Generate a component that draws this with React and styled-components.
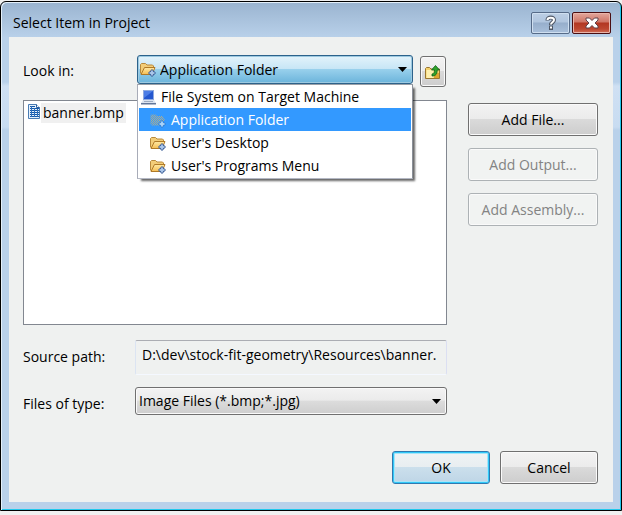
import React, { useState } from "react";
import styled, { createGlobalStyle, css } from "styled-components";

const GlobalStyle = createGlobalStyle`
  * { box-sizing: border-box; }
  body {
    margin: 0;
    background: #f0f0f0;
    color: #000;
    font: 14px/20px "Open Sans", "Noto Sans", sans-serif;
  }
  button, input, select { font: inherit; color: inherit; margin: 0; }
`;

const Dialog = styled.main`
  position: relative;
  border: 1px solid #000;
  border-radius: 6px 6px 0 0;
  margin-top: 1px;
  padding: 0 8px 8px;
  background: linear-gradient(#9ab4d0 0, #b9d1ea 36px, #b9d1ea 80px, #cfe0f3 84px, #c8dcf1 125px, #b9d1ea 128px);
  box-shadow: inset 1px 1px 0 #e4f0fa, inset -1px -1px 0 #20c8ec;
`;

const TitleBar = styled.header`
  display: flex;
  align-items: flex-start;
  justify-content: space-between;
  height: 35px;
  padding-left: 4px;
`;

const Title = styled.h1`
  margin: 11px 0 0;
  font: inherit;
`;

const Captions = styled.div`
  display: flex;
  gap: 2px;
  padding: 10px 2px 0 0;
`;

const CaptionButton = styled.button`
  display: flex;
  align-items: center;
  justify-content: center;
  width: 39px;
  height: 22px;
  padding: 0;
  border: 1px solid ${(p) => (p.$close ? "#4a0e12" : "#566b88")};
  border-radius: 2px;
  background: ${(p) =>
    p.$close
      ? "linear-gradient(#e3a79c 0, #cf7566 45%, #b23722 50%, #bd4730 80%, #d0705c)"
      : "linear-gradient(#bccfe5 0, #b0c5de 45%, #96aecb 50%, #a9c0db)"};
  box-shadow: inset 0 0 0 1px ${(p) => (p.$close ? "#e9b5aa" : "#cfdff0")};
`;

const Body = styled.form`
  background: #eff1f0;
  padding: 18px 15px 18px 14px;
`;

const Columns = styled.div`
  display: grid;
  grid-template-columns: minmax(0, 1fr) 130px;
  column-gap: 21px;
`;

const LookRow = styled.div`
  display: grid;
  grid-template-columns: 114px minmax(0, 1fr) 27px;
  align-items: start;
  height: 45px;
`;

const Label = styled.label`
  padding-top: 6px;
`;

const Combo = styled.div`
  position: relative;
  margin-right: 7px;
`;

const ComboIcon = styled.span`
  position: absolute;
  left: 3px;
  top: 6px;
  pointer-events: none;
`;

const Arrow = styled.svg`
  position: absolute;
  right: 6px;
  top: 12px;
  pointer-events: none;
`;

const Select = styled.select`
  display: block;
  appearance: none;
  width: 100%;
  height: ${(p) => (p.$hot ? "29px" : "28px")};
  padding: 0 20px 0 ${(p) => (p.$hot ? "22px" : "3px")};
  border: 1px solid ${(p) => (p.$hot ? "#2c628b" : "#707070")};
  border-radius: 3px;
  outline: none;
  background: ${(p) =>
    p.$hot
      ? "linear-gradient(#e3f3fb 0, #c6e5f5 49%, #98d0ec 50%, #6bb4db)"
      : "linear-gradient(#f3f3f3 0, #ebebeb 47%, #dcdcdc 50%, #cecece)"};
  box-shadow: inset 0 0 0 1px ${(p) => (p.$hot ? "#9cc9e0" : "#fafafa")};
`;

const Popup = styled.ul`
  position: absolute;
  z-index: 2;
  top: 100%;
  left: 0;
  right: 0;
  margin: 0;
  padding: 0 1px 1px;
  list-style: none;
  background: #fff;
  border: 1px solid #8a8f98;
  border-color: #9aa0a8 #8a8f98 #b4b8c4 #a8acb8;
  box-shadow: 3px 3px 2px -1px rgba(0, 0, 0, 0.6);
`;

const Option = styled.li`
  display: flex;
  align-items: center;
  gap: 5px;
  height: 23px;
  padding-left: ${(p) => (p.$nested ? "11px" : "2px")};
  white-space: nowrap;
  ${(p) =>
    p.$active &&
    css`
      background: #3399ff;
      color: #fff;
    `}
`;

const buttonFace = css`
  border: 1px solid #707070;
  border-radius: 3px;
  background: linear-gradient(#f3f3f3 0, #ebebeb 49%, #dadada 50%, #cdcdcd);
  box-shadow: inset 0 0 0 1px #fafafa;
`;

const PushButton = styled.button`
  ${buttonFace}
  height: 33px;
  padding: 0;
  &:disabled {
    color: #838383;
    border-color: #adb2b5;
    background: #f1f3f2;
  }
  ${(p) =>
    p.$primary &&
    css`
      border-color: #3079b0;
      background: linear-gradient(#f0f3f4 0, #e8eef1 49%, #cbdfec 50%, #bed5e6);
      box-shadow: inset 0 0 0 1px #30c8f8, inset 0 0 0 2px #a8e4f8;
    `}
`;

const UpButton = styled.button`
  ${buttonFace}
  display: flex;
  align-items: center;
  justify-content: center;
  width: 26px;
  height: 31px;
  margin-top: 1px;
  padding: 0;
`;

const FileList = styled.ul`
  height: 225px;
  margin: 0;
  padding: 2px 3px;
  list-style: none;
  background: #fff;
  border: 1px solid #828790;
`;

const FileItem = styled.li`
  display: flex;
  align-items: flex-start;
`;

const FileName = styled.span`
  padding: 0 2px;
  background: #f0f0f0;
`;

const Actions = styled.div`
  display: flex;
  flex-direction: column;
  gap: 12px;
  padding-top: 48px;
`;

const Fields = styled.div`
  display: grid;
  grid-template-columns: 112px minmax(0, 1fr);
  row-gap: 12px;
  padding-top: 15px;
`;

const PathInput = styled.input`
  min-width: 0;
  height: 35px;
  padding: 0 0 7px 6px;
  border: 1px solid;
  border-color: #abadb3 #dbdff2 #f4f8ff #dbe4f2;
  border-radius: 2px;
  outline: none;
  background: #eff1f0;
`;

const TypeCombo = styled.div`
  position: relative;
`;

const FieldLabel = styled.label`
  padding-top: 7px;
`;

const Footer = styled.footer`
  display: flex;
  justify-content: flex-end;
  gap: 10px;
  padding-top: 36px;
  ${PushButton} { width: 98px; }
`;

function FolderIcon({ selected }) {
  return (
    <svg width="16" height="16" viewBox="0 0 16 16" display="block" aria-hidden="true">
      <defs>
        <pattern id="dither" width="2" height="2" patternUnits="userSpaceOnUse">
          <rect width="2" height="2" fill="#b5ad86" />
          <path d="M0 0h1v1H0zM1 1h1v1H1z" fill="#3399ff" />
        </pattern>
        <linearGradient id="flap" x1="0" y1="0" x2="0" y2="1">
          <stop offset="0" stopColor="#ffeaa4" />
          <stop offset="1" stopColor="#f6bd52" />
        </linearGradient>
      </defs>
      <path
        d="M.5 12.500V3.500l1-1h4l1.500 1.500h5.500l1 1V7"
        fill={selected ? "url(#dither)" : "#f3cd78"}
        stroke={selected ? "none" : "#b98a3c"}
      />
      <path
        d="M1 13.500L4.500 6.500h10.500L12 13.500z"
        fill={selected ? "url(#dither)" : "url(#flap)"}
        stroke={selected ? "none" : "#b07a28"}
      />
      <path d="M12 8l4 4-4 4-4-4z" fill={selected ? "#2f7fd6" : "#365a96"} />
      <path d="M12 9.500l2.500 2.500-2.500 2.500L9.500 12z" fill={selected ? "#8cc4f6" : "#8fb4e4"} />
      <path
        d="M11.500 9.500h1v1h-1zM9.500 11.500h1v1h-1zM13.500 11.500h1v1h-1zM11.500 13.500h1v1h-1zM11.500 11.500h1v1h-1z"
        fill="#fff"
      />
    </svg>
  );
}

function ComputerIcon() {
  return (
    <svg width="15" height="16" viewBox="0 0 15 16" aria-hidden="true">
      <path d="M2 1h11v10H2z" fill="#8fa9de" />
      <path d="M3 2h9v8H3z" fill="#2457cf" />
      <path d="M3 2h9L3 9z" fill="#4c7de6" />
      <path d="M2 11h11l2 3H0z" fill="#dbe3ef" />
      <path d="M3 12.500h9" stroke="#9cabc1" />
      <path d="M0 14h15v1.500H0z" fill="#63779a" />
    </svg>
  );
}

function FileIcon() {
  return (
    <svg width="14" height="17" viewBox="0 0 14 17" aria-hidden="true">
      <path d="M1.500 1.500h8l3 3v11h-11z" fill="#e6f1fc" stroke="#4a7db4" />
      <path d="M9.500 1.500v3h3" fill="#fff" stroke="#2b5e9c" />
      <path
        d="M3 3.500h5M3 5.500h9M3 7.500h9M3 9.500h9M3 11.500h9M3 13.500h9"
        stroke="#1558a8"
      />
      <path d="M4.500 3v11M7.500 5v9M10.500 6v8" stroke="#2a6ebc" />
    </svg>
  );
}

function UpIcon() {
  return (
    <svg width="16" height="16" viewBox="0 0 16 16" aria-hidden="true">
      <path d="M.5 14.500v-10l1-1h3L6 5h8.500v9.500z" fill="#f5d16c" stroke="#9a7631" />
      <path d="M1.500 6h7v8h-7z" fill="#fff0ae" />
      <path d="M9 9h5v5H9z" fill="#dda62e" />
      <path d="M10.500 1.500L14.500 6h-2.300c0 4-1.500 6-5.200 6v-2c2-.2 2.500-1.500 2.500-4H6.500z" fill="#2fa32a" stroke="#0f5f1c" strokeWidth=".8" />
    </svg>
  );
}

function HelpIcon() {
  return (
    <svg width="14" height="16" viewBox="0 0 14 16" fill="none" aria-hidden="true">
      <path d="M3.500 5.500V5C3.500 1.500 10 1.500 10 5c0 2.200-3 2.200-3 5" stroke="#4f5866" strokeWidth="4" />
      <path d="M5 10.500h4v4.500H5z" fill="#4f5866" />
      <path d="M3.500 5V5C3.500 2 10 2 10 5c0 2.200-3 2.200-3 4.500" stroke="#fff" strokeWidth="2" />
      <path d="M6 11.500h2v2H6z" fill="#fff" />
    </svg>
  );
}

function CloseIcon() {
  return (
    <svg width="14" height="12" viewBox="0 0 14 12" aria-hidden="true">
      <path d="M1 1h3.500L7 3.500 9.500 1H13v2L10 6l3 3v2H9.500L7 8.500 4.500 11H1V9l3-3-3-3z" fill="#fff" stroke="#5e434b" />
    </svg>
  );
}

const ComboArrow = () => (
  <Arrow width="9" height="5" viewBox="0 0 9 5" aria-hidden="true">
    <path d="M0 0h9L4.500 5z" fill="#000" />
  </Arrow>
);

const LOCATIONS = [
  { name: "File System on Target Machine", root: true },
  { name: "Application Folder" },
  { name: "User's Desktop" },
  { name: "User's Programs Menu" },
];

export default function App() {
  const [location, setLocation] = useState("Application Folder");
  return (
    <>
      <GlobalStyle />
      <Dialog role="dialog" aria-labelledby="dialog-title">
        <TitleBar>
          <Title id="dialog-title">Select Item in Project</Title>
          <Captions>
            <CaptionButton type="button" aria-label="Help"><HelpIcon /></CaptionButton>
            <CaptionButton type="button" aria-label="Close" $close><CloseIcon /></CaptionButton>
          </Captions>
        </TitleBar>
        <Body onSubmit={(e) => e.preventDefault()}>
          <Columns>
            <div>
              <LookRow>
                <Label htmlFor="look-in">Look in:</Label>
                <Combo>
                  <Select id="look-in" $hot value={location} onChange={(e) => setLocation(e.target.value)}>
                    {LOCATIONS.map((l) => <option key={l.name}>{l.name}</option>)}
                  </Select>
                  <ComboIcon><FolderIcon /></ComboIcon>
                  <ComboArrow />
                  <Popup role="listbox" aria-label="Look in">
                    {LOCATIONS.map((l) => (
                      <Option
                        key={l.name}
                        role="option"
                        aria-selected={l.name === location}
                        $active={l.name === location}
                        $nested={!l.root}
                        onClick={() => setLocation(l.name)}
                      >
                        {l.root ? <ComputerIcon /> : <FolderIcon selected={l.name === location} />}
                        {l.name}
                      </Option>
                    ))}
                  </Popup>
                </Combo>
                <UpButton type="button" aria-label="Up one level"><UpIcon /></UpButton>
              </LookRow>
              <FileList aria-label="Files">
                <FileItem><FileIcon /><FileName>banner.bmp</FileName></FileItem>
              </FileList>
              <Fields>
                <FieldLabel htmlFor="source">Source path:</FieldLabel>
                <PathInput id="source" readOnly value={"D:\\dev\\stock-fit-geometry\\Resources\\banner."} />
                <FieldLabel htmlFor="type">Files of type:</FieldLabel>
                <TypeCombo>
                  <Select id="type"><option>Image Files (*.bmp;*.jpg)</option></Select>
                  <ComboArrow />
                </TypeCombo>
              </Fields>
            </div>
            <Actions>
              <PushButton type="button">Add File...</PushButton>
              <PushButton type="button" disabled>Add Output...</PushButton>
              <PushButton type="button" disabled>Add Assembly...</PushButton>
            </Actions>
          </Columns>
          <Footer>
            <PushButton type="submit" $primary>OK</PushButton>
            <PushButton type="button">Cancel</PushButton>
          </Footer>
        </Body>
      </Dialog>
    </>
  );
}
